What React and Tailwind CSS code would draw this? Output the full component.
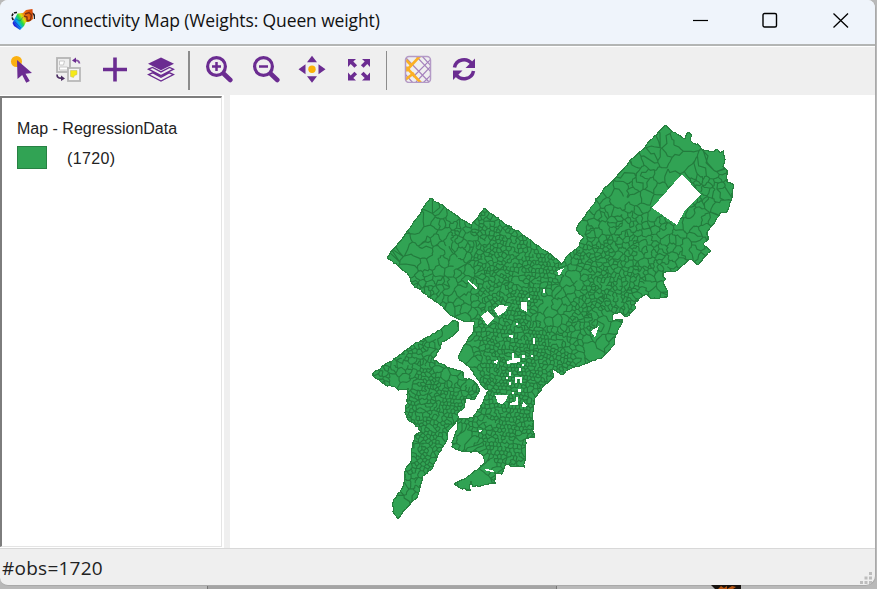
import React from "react";

const PURPLE = "#6b2c91";

const MAINLAND = [
  [387,257],[397,245],[410,228],[421,213],[423,208],[430,198],[445,207],[460,218],[471,225],[478,217],[484,208],
  [500,220],[523,235],[540,247],[560,262],[561,265],[568,255],[577,248],[584,237],[576,229],[590,209],[603,190],[613,180],
  [633,158],[642,150],[653,138],[665,125],[673,132],[685,139],[688,132],[691,134],[690,140],[693,143],[698,144],[703,150],
  [713,152],[717,149],[720,153],[723,151],[725,160],[723,167],[727,170],[727,182],[733,184],[732,197],[727,212],[720,213],
  [715,222],[707,232],[708,240],[703,244],[711,251],[698,265],[690,259],[683,265],[676,271],[663,273],[663,277],[666,279],
  [663,283],[668,293],[667,297],[652,299],[646,294],[635,303],[636,308],[626,317],[621,312],[612,315],[613,321],[622,320],
  [621,325],[616,335],[614,345],[603,357],[590,362],[572,368],[561,375],[553,369],[553,378],[542,388],[535,398],[533,407],
  [533,425],[534,437],[526,438],[526,453],[524,467],[505,465],[502,474],[495,473],[495,483],[473,487],[471,481],[470,490],
  [462,489],[454,484],[467,477],[477,470],[485,462],[483,455],[477,451],[464,452],[452,447],[452,442],[457,430],[458,419],
  [473,418],[483,403],[487,392],[493,391],[483,387],[478,380],[470,368],[458,358],[463,347],[473,333],[475,322],[463,321],
  [450,315],[440,305],[427,295],[413,285],[407,273],
];

const SOUTHWEST = [
  [452,321],[458,322],[459,330],[453,336],[442,342],[439,350],[433,360],[447,367],[463,372],[464,378],[472,380],[478,386],
  [479,392],[475,399],[465,399],[464,408],[457,414],[459,418],[447,433],[448,438],[438,455],[432,469],[422,477],[420,488],
  [418,495],[406,509],[398,519],[393,512],[393,502],[403,487],[406,468],[412,460],[412,448],[415,435],[422,432],[418,427],
  [409,421],[405,413],[407,400],[408,389],[398,390],[395,387],[387,386],[379,380],[373,376],[373,373],[397,357],[413,345],[440,330],
];

const HOLES = [
  [[682,174],[701,195],[685,210],[677,225],[652,208]],
  [[468,280],[477,287],[477,289],[475,289],[468,282]],
  [[481,316],[488,311],[494,318],[487,325]],
  [[494,309],[500,305],[508,306],[505,312],[498,316]],
  [[521,302],[527,302],[527,312],[521,309]],
  [[557,271],[564,268],[559,276]],
  [[591,331],[599,326],[595,338]],
  [[543,289],[545,289],[545,293],[543,293]],
  [[533,338],[535,338],[535,344],[533,344]],
  [[509,335],[513,335],[513,338],[509,337]],
  [[512,353],[514,353],[514,358],[520,358],[520,362],[507,364],[507,361],[512,360]],
  [[494,361],[498,360],[497,364],[494,363]],
  [[522,355],[525,355],[525,358],[522,358]],
  [[531,355],[533,355],[533,357],[531,357]],
  [[522,364],[524,364],[524,366],[522,366]],
  [[509,372],[511,372],[511,376],[509,376]],
  [[519,368],[521,368],[521,371],[519,371]],
  [[515,377],[522,377],[522,383],[520,383],[520,379],[517,379],[517,383],[515,383]],
  [[506,377],[508,377],[508,379],[506,379]],
  [[509,382],[511,382],[511,385],[509,385]],
  [[518,389],[521,389],[521,392],[518,392]],
  [[495,395],[508,395],[506,400],[502,404],[498,403]],
  [[512,392],[514,392],[514,394],[512,394]],
  [[516,397],[518,397],[518,405],[510,405],[510,403],[516,401]],
  [[523,402],[527,405],[526,407],[522,407]],
  [[479,430],[482,430],[480,433]],
  [[516,323],[518,323],[518,325],[516,325]],
  [[528,298],[530,298],[530,300],[528,300]],
  [[485,469],[493,470],[494,472],[486,471]],
];

// Tract density zones: x, y, spacing, grid angle, jitter
const ZONES = [
  [400,254,15,0.6,1.1],[424,220,10,0.6,1.2],[444,265,10,0.6,1.2],[442,238,8,0.6,1.2],[425,285,6,0.6,1.1],[452,306,8,0.7,1],
  [438,298,4.3,0.7,0.9],[462,238,5.5,0.6,1],[462,275,8,0.6,1],[484,232,4,0.6,0.8],[490,255,3.8,0.3,0.7],[520,258,4,0.1,0.35],[500,284,3.9,0.6,0.8],
  [542,275,3.8,0.1,0.5],[548,313,9,0.3,0.7],[528,300,3.6,0.1,0.4],[665,145,9,0.7,1.1],[642,175,9,0.5,1.2],[618,196,9,0.7,1.2],
  [698,158,21,0.7,0.7],[722,198,13,0.6,1],[709,188,5.5,0.7,1],[693,215,7,0.6,1],[660,198,12,0.7,0.9],[596,222,7,0.6,1],
  [622,230,5,0.6,1],[645,230,6,0.6,1],[605,250,4.3,0.6,0.9],[600,270,4,0.8,0.9],[635,268,4.1,0.8,0.9],[618,292,3.8,0.8,0.9],
  [588,302,3.8,0.8,0.9],[650,250,5.3,0.8,0.9],[675,250,7,0.8,0.9],[695,252,10,0.8,0.6],[571,288,9,0.4,0.9],[657,292,10,0.5,0.7],
  [580,330,4.4,0.8,0.8],[556,352,3.8,0.5,0.5],[596,352,18,0.6,0.6],[606,332,8,0.6,0.8],[500,335,3.8,0.1,0.45],[465,352,17,0.2,0.5],
  [485,350,3.8,0.1,0.4],[520,370,3.4,0.12,0.4],[540,340,3.5,0.1,0.4],[500,430,3.7,0.1,0.4],[512,450,4,0.1,0.4],[461,440,15,0.2,0.6],
  [478,482,20,0.5,0.6],[515,400,3.6,0.1,0.4],[475,425,4.2,0.3,0.5],[383,376,4.4,0.6,0.9],[396,382,11,0.6,0.7],[415,355,4.2,0.7,0.9],
  [448,332,8,0.7,0.8],[430,375,3.6,0.2,0.6],[446,368,9,0.4,0.5],[445,400,3.6,0.1,0.5],[425,408,3.6,0.1,0.4],[430,432,3.8,0.7,0.5],
  [426,455,4,0.7,0.7],[413,480,5,0.5,0.7],[402,503,26,0.5,0.4],
];

function random(seed) {
  let s = seed;
  return () => {
    s = (s * 1664525 + 1013904223) >>> 0;
    return s / 4294967296;
  };
}

function inside(x, y, poly) {
  let hit = false;
  for (let i = 0, j = poly.length - 1; i < poly.length; j = i++) {
    const [xi, yi] = poly[i];
    const [xj, yj] = poly[j];
    if (yi > y !== yj > y && x < ((xj - xi) * (y - yi)) / (yj - yi) + xi) hit = !hit;
  }
  return hit;
}

function makeSites() {
  const rnd = random(1720);
  const sites = [];
  ZONES.forEach(([cx, cy, step, angle, jitter], zi) => {
    const n = Math.ceil(60 / step);
    const c = Math.cos(angle);
    const s = Math.sin(angle);
    for (let i = -n; i <= n; i++) {
      for (let j = -n; j <= n; j++) {
        const u = (i + (j % 2) * 0.4 + (rnd() - 0.5) * jitter) * step;
        const v = (j + (rnd() - 0.5) * jitter) * step;
        const drop = rnd() < 0.12;
        const x = cx + u * c - v * s;
        const y = cy + u * s + v * c;
        let best = 0;
        let dist = Infinity;
        ZONES.forEach((z, k) => {
          const d = Math.hypot(z[0] - x, z[1] - y);
          if (d < dist) {
            dist = d;
            best = k;
          }
        });
        if (best === zi && !drop && (inside(x, y, MAINLAND) || inside(x, y, SOUTHWEST))) sites.push([x, y]);
      }
    }
  });
  return sites;
}

// Voronoi cell of one site, by clipping a box with each bisector
function cellOf(site, sites) {
  const [x, y] = site;
  const r = 26;
  let poly = [[x - r, y - r], [x + r, y - r], [x + r, y + r], [x - r, y + r]];
  for (const o of sites) {
    const dx = o[0] - x;
    const dy = o[1] - y;
    if (o === site || Math.abs(dx) > 40 || Math.abs(dy) > 40) continue;
    const k = (dx * dx + dy * dy) / 2;
    const out = [];
    for (let i = 0; i < poly.length; i++) {
      const a = poly[i];
      const b = poly[(i + 1) % poly.length];
      const da = (a[0] - x) * dx + (a[1] - y) * dy - k;
      const db = (b[0] - x) * dx + (b[1] - y) * dy - k;
      if (da <= 0) out.push(a);
      if (da < 0 !== db < 0) {
        const t = da / (da - db);
        out.push([a[0] + (b[0] - a[0]) * t, a[1] + (b[1] - a[1]) * t]);
      }
    }
    poly = out;
  }
  return poly;
}

// Cell borders: each shared edge is drawn once, bent a little, and some are left open
function borders(sites) {
  const seen = new Set();
  let d = "";
  for (const site of sites) {
    const cell = cellOf(site, sites);
    cell.forEach((a, i) => {
      const b = cell[(i + 1) % cell.length];
      const mx = (a[0] + b[0]) / 2;
      const my = (a[1] + b[1]) / 2;
      const key = Math.round(mx * 5) * 10007 + Math.round(my * 5);
      if (seen.has(key)) return;
      seen.add(key);
      const rnd = random(key);
      rnd();
      if (rnd() < 0.09) return;
      const len = Math.hypot(b[0] - a[0], b[1] - a[1]);
      d += "M" + a[0].toFixed(1) + " " + a[1].toFixed(1);
      if (len > 4) {
        for (let k = 1; k < 3; k++) {
          const w = len * 0.36;
          const px = a[0] + ((b[0] - a[0]) * k) / 3 + (rnd() - 0.5) * w;
          const py = a[1] + ((b[1] - a[1]) * k) / 3 + (rnd() - 0.5) * w;
          d += "L" + px.toFixed(1) + " " + py.toFixed(1);
        }
      }
      d += "L" + b[0].toFixed(1) + " " + b[1].toFixed(1);
    });
  }
  return d;
}

const toPath = (p) => "M" + p.map(([x, y]) => x.toFixed(1) + " " + y.toFixed(1)).join("L") + "Z";

// Adds small irregular steps along a boundary
function roughen(poly, seed) {
  const rnd = random(seed);
  const out = [];
  poly.forEach((a, i) => {
    const b = poly[(i + 1) % poly.length];
    const len = Math.hypot(b[0] - a[0], b[1] - a[1]);
    const n = Math.max(1, Math.round(len / 3));
    for (let k = 0; k < n; k++) {
      const w = k ? 1.5 : 0;
      out.push([a[0] + ((b[0] - a[0]) * k) / n + (rnd() - 0.5) * w, a[1] + ((b[1] - a[1]) * k) / n + (rnd() - 0.5) * w]);
    }
  });
  return out;
}

const TRACTS = borders(makeSites());
const LAND = toPath(roughen(MAINLAND, 7)) + toPath(roughen(SOUTHWEST, 9));
const GAPS = HOLES.map(toPath).join("");

function TractMap() {
  return (
    <svg className="block h-full w-full" viewBox="230 95 645 453">
      <clipPath id="land">
        <path d={LAND} />
      </clipPath>
      <path d={LAND} fill="#31a354" />
      <path d={TRACTS} clipPath="url(#land)" fill="none" stroke="#237b3d" strokeWidth="1.15" />
      <path d={LAND} fill="none" stroke="#26813f" strokeWidth="1.2" shapeRendering="crispEdges" />
      <path d={GAPS} fill="#fff" shapeRendering="crispEdges" />
    </svg>
  );
}

function AppIcon() {
  return (
    <svg className="h-6 w-6 shrink-0" viewBox="0 0 24 24">
      <defs>
        <linearGradient id="spectrum" x1="0" y1="0.85" x2="1" y2="0.2">
          <stop offset="0.1" stopColor="#2418d8" />
          <stop offset="0.28" stopColor="#08a8f0" />
          <stop offset="0.42" stopColor="#20d848" />
          <stop offset="0.55" stopColor="#d8e010" />
          <stop offset="0.68" stopColor="#f07810" />
          <stop offset="1" stopColor="#d84808" />
        </linearGradient>
      </defs>
      <path d="M6 4.500C1.500 4 0 8 2 11.500L4 13" fill="none" stroke="#151515" strokeWidth="1.600" strokeDasharray="3 1" />
      <path d="M20 5q4 0 3.500 6" fill="none" stroke="#222" strokeWidth="1.500" />
      <path d="M3.500 11 6.500 5.500l5.500-.5 3-3 6.500-1 .5 10-4 3-3 0-2 4-4 4-6-4-1.500-3z" fill="url(#spectrum)" />
      <path d="m14 6 4-1.500 2.500 2.500-1 5-4 1M13 8l3 1v3" fill="none" stroke="#803010" strokeWidth="1.400" />
      <path d="m4 14 4 4 2 2M5 11l4 2 3-4" fill="none" stroke="#1828a0" strokeOpacity=".4" />
    </svg>
  );
}

function Icon({ className, children }) {
  return (
    <svg className={"h-7 w-7 shrink-0 " + className} viewBox="0 0 28 28" fill="none">
      {children}
    </svg>
  );
}

const Separator = ({ className }) => <div className={"mt-[2px] h-[39px] w-[1.5px] shrink-0 bg-[#8c8c8c] " + className} />;

function Magnifier({ plus }) {
  return (
    <>
      <circle cx="11.500" cy="11.500" r="8.900" stroke={PURPLE} strokeWidth="3.200" />
      <path d="m19 19 6.300 6" stroke={PURPLE} strokeWidth="4.600" strokeLinecap="round" />
      <path d={plus ? "M7 11.500h9M11.500 7v9" : "M7 11.500h9"} stroke={PURPLE} strokeWidth="2.500" />
    </>
  );
}

function Toolbar() {
  return (
    <div className="flex h-[49px] shrink-0 items-center border-t border-white bg-[#efefef] pb-[4px] pl-[9px]">
      <Icon className="">
        <circle cx="7.500" cy="6.500" r="5.500" fill="#fbb010" />
        <path d="m8 5 15 13-6.500.7 4.300 7.300-3.600 1.700-4-7.600L8.500 24z" fill={PURPLE} />
      </Icon>
      <Icon className="ml-[17px]">
        <rect x="3" y="3" width="13" height="14" fill="#eee" stroke="#b4b4b4" strokeWidth="1.800" />
        <path d="M5.500 6h5l-1 4h-4zM5.500 12h8v3h-8z" fill="#fff" stroke="#c8c8c8" />
        <rect x="14" y="13" width="12" height="13" fill="#f5f5f5" stroke="#b8b8b8" strokeWidth="1.800" />
        <path d="M16.500 15.500h6.500v4l-2.500 1-1 2-3-1z" fill="#f5ea18" stroke="#c0b860" strokeWidth=".5" />
        <path d="M21 5.500q4-.5 4.500 3" stroke={PURPLE} strokeOpacity=".8" strokeWidth="1.700" />
        <path d="m22 2.500-4 3 4 2.500z" fill={PURPLE} />
        <path d="M3 19.500q0 4 4.500 3.500" stroke="#4a2c62" strokeWidth="1.700" />
        <path d="m7 20.500 4 3-4 2.500z" fill="#4a2c62" />
      </Icon>
      <Icon className="ml-[19px]">
        <path d="M2 14.500h24M14 2.500v24" stroke={PURPLE} strokeWidth="3.600" />
      </Icon>
      <Icon className="ml-[18px]">
        <path d="m14 2.500 13 6.300-13 6.500L1 8.800z" fill={PURPLE} />
        <path d="m1.500 14.200 4-1.800 8.500 4.500 8.500-4.500 4 1.800-12.500 6.500zM1.500 19.600l4-1.800 8.500 4.500 8.500-4.500 4 1.800-12.500 6.500z" stroke={PURPLE} strokeWidth="1.300" />
      </Icon>
      <Separator className="ml-[13px]" />
      <Icon className="ml-[15px]"><Magnifier plus /></Icon>
      <Icon className="ml-[19px]"><Magnifier /></Icon>
      <Icon className="ml-[18px]">
        <path d="m14 .8 5 6.500H9zM14 27.700l5-6.500H9zM.5 14.200l7-5v10zM27.500 14.200l-7-5v10z" fill={PURPLE} />
        <circle cx="14" cy="14.200" r="3.700" fill="#fbb008" />
      </Icon>
      <Icon className="ml-[19px]">
        <path d="M3 4h8L8.300 6.500l3.800 3.700-2.700 2.500-3.700-3.700L3 12zM25 4v8l-2.700-3-3.700 3.700-2.700-2.500 3.800-3.700L17 4zM3 25.500v-8l2.700 3 3.700-3.700 2.700 2.500-3.800 3.700 2.700 2.500zM25 25.500h-8l2.700-2.500-3.800-3.700 2.700-2.500 3.700 3.700 2.700-3z" fill={PURPLE} />
      </Icon>
      <Separator className="ml-[13px]" />
      <Icon className="ml-[17px]">
        <clipPath id="basemap"><rect x="1.500" y="1.500" width="25" height="26" rx="3.500" /></clipPath>
        <g clipPath="url(#basemap)">
          <path d="m2 3 24 25M12 1l16 17M18 1l10 11M28 3 9 22M28 10 12 27M28 19 19 28M1 19l8 9" stroke="#a583bd" strokeWidth="1.200" />
          <path d="M16 1 2 16M2 5l5 5M2 12l15 16M1 25l9-7" stroke="#fbb024" strokeWidth="2.600" />
        </g>
        <rect x="1.500" y="1.500" width="25" height="26" rx="3.500" stroke="#b49ac6" strokeWidth="1.500" />
      </Icon>
      <Icon className="ml-[18px]">
        <path d="M4.500 12.500C6 4 17 2 22 9" stroke={PURPLE} strokeWidth="3.500" />
        <path d="M25 3.500V13h-9.500z" fill={PURPLE} />
        <path d="M23.500 16C22 24.500 11 26.500 6 19.500" stroke={PURPLE} strokeWidth="3.500" />
        <path d="M3 25v-9.500h9.500z" fill={PURPLE} />
      </Icon>
    </div>
  );
}

function WindowControls() {
  return (
    <div className="ml-auto flex items-center gap-[53px] pr-[26px] text-black">
      <svg className="h-4 w-4" viewBox="0 0 16 16"><path d="M0 8.500h15" stroke="currentColor" strokeWidth="1.200" /></svg>
      <svg className="h-4 w-4" viewBox="0 0 16 16" fill="none"><rect x="1" y="1.500" width="13.500" height="13.500" rx="1.500" stroke="currentColor" strokeWidth="1.400" /></svg>
      <svg className="ml-[2px] h-4 w-4" viewBox="0 0 16 16"><path d="m.5 1.500 14.500 14M15 1.500.5 15.500" stroke="currentColor" strokeWidth="1.300" /></svg>
    </div>
  );
}

export default function App() {
  return (
    <div className="relative h-[589px] w-[877px] overflow-hidden bg-[#b9b9b9]">
      <div className="flex h-[586px] w-[876px] flex-col overflow-hidden rounded-tl-[8px] rounded-tr-[8px] rounded-br-[10px] rounded-bl-[8px] border-r border-b border-[#a9a9a9] bg-[#efefef]">
        <header className="flex h-[44px] shrink-0 items-center bg-[#eff4fb] pb-[5px] pl-[11px]">
          <AppIcon />
          <h1 className="ml-[6px] whitespace-nowrap font-['Open_Sans','Noto_Sans',sans-serif] text-[17.500px] leading-6 tracking-[-0.12px] text-[#111]">
            Connectivity Map (Weights: Queen weight)
          </h1>
          <WindowControls />
        </header>
        <div className="h-[2px] shrink-0 bg-[#b3b5b4]" />
        <Toolbar />
        <main className="flex h-[453px] shrink-0">
          <aside className="h-[453px] w-[224px] shrink-0 bg-white pt-px">
            <div className="h-[451px] w-[222px] border-t-2 border-r border-b border-l-2 border-t-[#7d7d7d] border-r-[#e4e4e4] border-b-[#e4e4e4] border-l-[#7d7d7d] pt-[21px] pl-[15px] font-['Liberation_Sans',Arial,sans-serif] text-[16px] leading-5 text-[#222]">
              <div className="whitespace-nowrap">Map - RegressionData</div>
              <div className="mt-[7px] flex h-[23px] items-center">
                <div className="h-[23px] w-[30px] border border-[#278143] bg-[#31a354]" />
                <span className="ml-[20px] pt-[2px] tracking-[0.35px]">(1720)</span>
              </div>
            </div>
          </aside>
          <div className="w-[6px] shrink-0 bg-[#efefef]" />
          <div className="min-w-0 flex-1 bg-white"><TractMap /></div>
        </main>
        <footer className="flex min-h-0 flex-1 items-center justify-between border-t border-[#d8d8d8] pl-[2px] font-['Open_Sans','Noto_Sans',sans-serif] text-[19px] text-[#222]">
          <span className="pt-[3px] tracking-[0.25px]">#obs=1720</span>
          <svg className="mr-[2px] h-[13px] w-[13px] self-end" viewBox="0 0 13 13" fill="#bdbdbd">
            <path d="M9 0h3v3H9zM4.500 4.500h3v3h-3zM9 4.500h3v3H9zM0 9h3v3H0zM4.500 9h3v3h-3zM9 9h3v3H9z" />
          </svg>
        </footer>
      </div>
      <svg className="absolute bottom-0 left-[711px] h-[4px] w-[30px]" viewBox="0 0 30 4">
        <path d="M0 0h30v4H4z" fill="#171310" />
        <path d="m7 4 3-3 3 2 3-2v3l5-3 4 1-3 2z" fill="#b75613" />
      </svg>
      <div className="absolute bottom-0 left-[207px] h-[3px] w-[350px] border-x border-[#777] bg-[#a4a4a4]" />
    </div>
  );
}
